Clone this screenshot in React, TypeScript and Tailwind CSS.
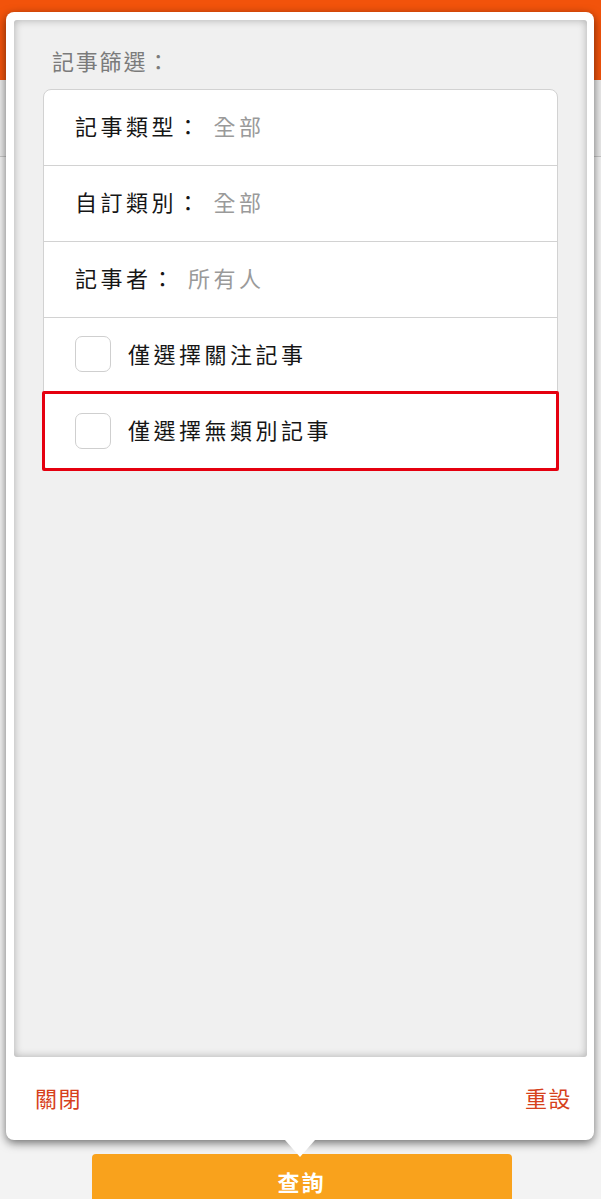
const FONT = { fontFamily: '"Noto Sans CJK TC", "Noto Sans", sans-serif' };

function Row({ label, value }: { label: string; value: string }) {
  return (
    <div className="h-[76px] flex items-center px-[31px] pb-[5px] border-b border-[#d2d2d2] text-[22px] tracking-[3.5px]">
      <span className="text-[#161616]">{label}：</span>
      <span className="ml-[11px] text-[#9a9a9a]">{value}</span>
    </div>
  );
}

function CheckRow({ label, marked, last }: { label: string; marked?: boolean; last?: boolean }) {
  return (
    <div className={`relative h-[76px] flex items-center px-[31px] pb-[3px] ${last ? '' : 'border-b border-[#d2d2d2]'}`}>
      <div className="w-[36px] h-[36px] rounded-[7px] border-[1.5px] border-[#cfcfcf] bg-white" />
      <span className="ml-[17px] pb-[2px] text-[22px] tracking-[3.5px] text-[#161616]">{label}</span>
      {marked && (
        <div className="absolute -left-[2px] -right-[2px] -top-[3px] -bottom-[1px] border-[3.5px] border-[#e5000f] rounded-[2px]" />
      )}
    </div>
  );
}

export default function App() {
  return (
    <div className="relative w-full h-[1199px] overflow-hidden bg-[#f3f3f3] flex flex-col" style={FONT}>
      {/* page behind the popover */}
      <div className="h-[80px] bg-[#f2530b]" />
      <div className="h-[77px] bg-[#ebebeb] border-b border-[#c8c8c8]" />
      <div className="flex-1" />
      <div className="flex justify-center">
        <button className="w-[420px] h-[45px] ml-[2px] pt-[8px] leading-none rounded-t-[4px] bg-[#f9a21c] text-white text-[22px] font-bold tracking-[2px]">
          查詢
        </button>
      </div>

      {/* filter popover */}
      <div className="absolute left-[6px] top-[12px] w-[588px] h-[1128px] bg-white rounded-[8px] shadow-[0_3px_10px_rgba(0,0,0,0.55)] flex flex-col pt-[8px] pl-[8px] pr-[7px]">
        <div className="flex-1 bg-[#f0f0f0] rounded-[3px] shadow-[inset_0_0_9px_rgba(0,0,0,0.28)] px-[29px]">
          <div className="pt-[25px] pl-[9px] h-[69px] text-[22px] leading-[30px] tracking-[1.8px] text-[#7b7b7b]">記事篩選：</div>
          <div className="bg-white border border-[#d2d2d2] rounded-[8px]">
            <Row label="記事類型" value="全部" />
            <Row label="自訂類別" value="全部" />
            <Row label="記事者" value="所有人" />
            <CheckRow label="僅選擇關注記事" />
            <CheckRow label="僅選擇無類別記事" marked last />
          </div>
        </div>
        <div className="h-[83px] flex items-center justify-between pl-[21px] pr-[15px] pb-[2px] text-[22px] tracking-[1.5px] text-[#d6411c]">
          <span>關閉</span>
          <span>重設</span>
        </div>
        {/* pointer */}
        <div className="absolute left-1/2 -bottom-[17px] -translate-x-1/2 w-0 h-0 border-l-[15px] border-r-[15px] border-t-[17px] border-l-transparent border-r-transparent border-t-white" />
      </div>
    </div>
  );
}
